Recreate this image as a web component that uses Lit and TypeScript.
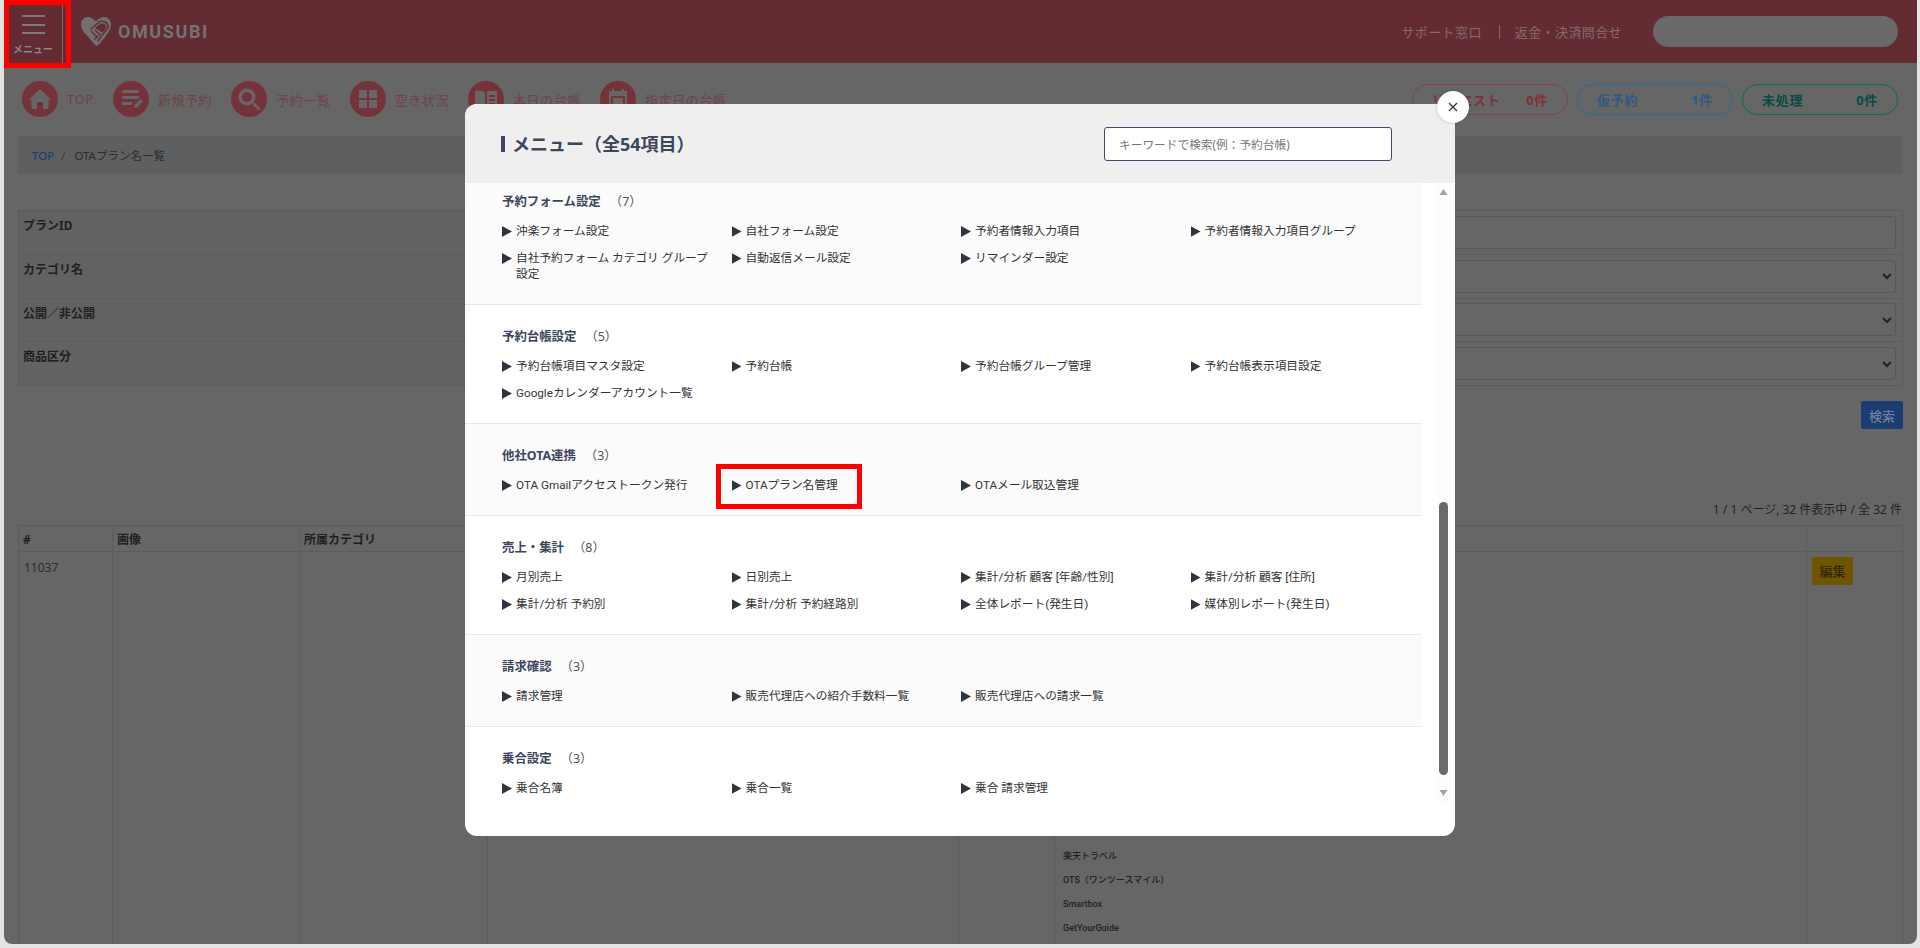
import { LitElement, css, html, svg } from "lit";
import { customElement } from "lit/decorators.js";

const menuSections = [
  {
    title: "予約フォーム設定",
    items: ["沖楽フォーム設定", "自社フォーム設定", "予約者情報入力項目", "予約者情報入力項目グループ", "自社予約フォーム カテゴリ グループ設定", "自動返信メール設定", "リマインダー設定"],
  },
  {
    title: "予約台帳設定",
    items: ["予約台帳項目マスタ設定", "予約台帳", "予約台帳グループ管理", "予約台帳表示項目設定", "Googleカレンダーアカウント一覧"],
  },
  {
    title: "他社OTA連携",
    items: ["OTA Gmailアクセストークン発行", "OTAプラン名管理", "OTAメール取込管理"],
  },
  {
    title: "売上・集計",
    items: ["月別売上", "日別売上", "集計/分析 顧客 [年齢/性別]", "集計/分析 顧客 [住所]", "集計/分析 予約別", "集計/分析 予約経路別", "全体レポート(発生日)", "媒体別レポート(発生日)"],
  },
  {
    title: "請求確認",
    items: ["請求管理", "販売代理店への紹介手数料一覧", "販売代理店への請求一覧"],
  },
  {
    title: "乗合設定",
    items: ["乗合名簿", "乗合一覧", "乗合 請求管理"],
  },
];

// 36x36 viewBox, drawn in the dimmed page colour on top of the circle
const navIcons = {
  home: svg`<path d="M18 8 L29 18.5 L26.5 18.5 L26.5 28 L21 28 L21 21 L15 21 L15 28 L9.5 28 L9.5 18.5 L7 18.5 Z"/>`,
  form: svg`<rect x="9" y="9" width="17" height="3" rx="1"/><rect x="9" y="15" width="17" height="3" rx="1"/><rect x="9" y="21" width="10" height="3" rx="1"/><path d="M21 27 L21.8 23.5 L27.5 18 L30 20.5 L24.4 26.2 Z"/>`,
  search: svg`<path fill-rule="evenodd" d="M16 7.5 A8.5 8.5 0 1 1 15.99 7.5 Z M16 11 A5 5 0 1 0 16.01 11 Z"/><path d="M21.5 23.5 L23.5 21.5 L29.5 27.5 L27.5 29.5 Z"/>`,
  grid: svg`<rect x="9" y="9" width="8" height="8"/><rect x="19" y="9" width="8" height="8"/><rect x="9" y="19" width="8" height="8"/><rect x="19" y="19" width="8" height="8"/>`,
  book: svg`<path d="M7 10 C10 9 14 9.5 17 11.5 L17 27 C14 25.5 10 25 7 25.5 Z"/><path fill-rule="evenodd" d="M19 10 L29 10 L29 27 L19 27 Z M21 14 L21 16 L27 16 L27 14 Z M21 18 L21 20 L27 20 L27 18 Z M21 22 L21 24 L27 24 L27 22 Z"/>`,
  calendar: svg`<path fill-rule="evenodd" d="M9 10 L12 10 L12 8 L14 8 L14 10 L22 10 L22 8 L24 8 L24 10 L27 10 L27 28 L9 28 Z M11 15 L11 26 L25 26 L25 15 Z"/><rect x="13" y="17" width="10" height="7"/>`,
};

const navLinks: [keyof typeof navIcons, string][] = [
  ["home", "TOP"],
  ["form", "新規予約"],
  ["search", "予約一覧"],
  ["grid", "空き状況"],
  ["book", "本日の台帳"],
  ["calendar", "指定日の台帳"],
];

const counters = [
  { label: "リクエスト", count: "0件", tone: "red" },
  { label: "仮予約", count: "1件", tone: "blue" },
  { label: "未処理", count: "0件", tone: "green" },
];

const filters = [
  { label: "プランID", select: false },
  { label: "カテゴリ名", select: true },
  { label: "公開／非公開", select: true },
  { label: "商品区分", select: true },
];

const otaNames = ["楽天トラベル", "OTS（ワンツースマイル）", "Smartbox", "GetYourGuide"];

@customElement("app-root")
export class AppRoot extends LitElement {
  static styles = css`
    :host {
      display: block;
      position: relative;
      width: 1920px;
      height: 948px;
      overflow: hidden;
      background: #e4e4e4;
      font-family: "Noto Sans", "Noto Sans CJK JP", sans-serif;
      color: #2a2a2a;
    }

    .page {
      margin-left: 4px;
      width: 1913px;
      height: 944px;
      background: #666;
      border-radius: 0 0 8px 8px;
      overflow: hidden;
    }

    /* header */
    .header {
      height: 63px;
      background: #632c32;
      display: flex;
      align-items: center;
      padding-right: 19px;
    }
    .menu-button {
      width: 59px;
      height: 63px;
      border-right: 1px solid #7d6a6c;
      display: flex;
      flex-direction: column;
      align-items: center;
      padding-top: 15px;
      box-sizing: border-box;
      flex: none;
    }
    .menu-button i {
      display: block;
      width: 23px;
      height: 2px;
      background: #7b7b7b;
      margin-bottom: 6.5px;
    }
    .menu-button span {
      font-size: 10px;
      line-height: 14px;
      color: #8c8486;
      font-weight: 700;
      margin-top: 1px;
    }
    .logo {
      display: flex;
      align-items: center;
      margin-left: 18px;
      gap: 7px;
      color: #737373;
    }
    .logo svg {
      width: 30px;
      height: 29px;
      display: block;
    }
    .logo span {
      font-family: "Roboto", "Noto Sans", sans-serif;
      font-size: 18px;
      font-weight: 700;
      letter-spacing: 1.6px;
    }
    .support {
      margin-left: auto;
      display: flex;
      align-items: center;
      font-size: 13px;
      letter-spacing: 0.4px;
      color: #86696d;
    }
    .support i {
      width: 1px;
      height: 14px;
      background: #86696d;
      margin: 0 15px 0 17px;
    }
    .account {
      width: 245px;
      height: 31px;
      border-radius: 16px;
      background: #696969;
      margin-left: 31px;
    }

    /* shortcut row */
    .nav {
      display: flex;
      align-items: center;
      justify-content: space-between;
      padding: 18px 19px 19px 18px;
    }
    .links {
      display: flex;
      gap: 19px;
    }
    .link {
      display: flex;
      align-items: center;
      gap: 9px;
      font-size: 13px;
      letter-spacing: 0.6px;
      color: #704248;
    }
    .link svg {
      width: 36px;
      height: 36px;
      display: block;
      fill: #666;
      background: #76323a;
      border-radius: 50%;
    }
    .counters {
      display: flex;
      gap: 9px;
    }
    .counter {
      width: 156px;
      height: 31px;
      box-sizing: border-box;
      border: 1px solid;
      border-radius: 16px;
      display: flex;
      align-items: center;
      justify-content: space-between;
      padding: 0 19px;
      font-size: 13px;
      font-weight: 700;
      letter-spacing: 0.7px;
    }
    .counter.red { color: #7f3039; border-color: #86404a; }
    .counter.blue { color: #2f5a82; border-color: #2f6a98; }
    .counter.green { color: #064c44; border-color: #0a6a5c; }

    /* breadcrumb */
    .breadcrumb {
      margin: 0 15px 0 14px;
      height: 38px;
      box-sizing: border-box;
      background: #5e5f61;
      border-radius: 3px;
      display: flex;
      align-items: center;
      padding-left: 14px;
      font-size: 11.5px;
      color: #2c2c2c;
    }
    .breadcrumb a { color: #0f3f72; }
    .breadcrumb span { margin: 0 9px 0 7px; color: #3a3a3a; }

    /* search form */
    .filters {
      margin: 36px 14px 0 14px;
      border: 1px solid #5c5c5c;
      border-bottom-width: 0;
    }
    .filter {
      display: grid;
      grid-template-columns: 600px 1fr;
      height: 43.75px;
      border-bottom: 1px solid #5c5c5c;
      box-sizing: border-box;
    }
    .filter label {
      background: #626262;
      padding: 7px 4px;
      font-size: 12px;
      line-height: 16px;
      font-weight: 700;
      color: #1f1f1f;
    }
    .filter div {
      display: flex;
      align-items: center;
      padding: 0 6px;
    }
    .filter .field {
      flex: 1;
      height: 33px;
      box-sizing: border-box;
      border: 1px solid #595959;
      border-radius: 3px;
      display: flex;
      align-items: center;
      justify-content: flex-end;
      padding: 0 2px 0 0;
    }
    .field svg { width: 12px; height: 12px; display: block; }
    .actions {
      display: flex;
      justify-content: flex-end;
      margin: 15px 14px 0 0;
    }
    .search-button {
      width: 42px;
      height: 28px;
      background: #1c3d70;
      color: #7c8aa2;
      border-radius: 2px;
      font-size: 13px;
      display: flex;
      align-items: center;
      justify-content: center;
    }
    .pager {
      margin: 72px 15px 6px 0;
      text-align: right;
      font-size: 12px;
      line-height: 18px;
      color: #222;
    }

    /* plans table */
    .table {
      margin: 0 14px 0 14px;
      border-top: 1px solid #5c5c5c;
      border-left: 1px solid #5c5c5c;
      display: grid;
      grid-template-columns: 94px 187px 188px 471px 96px 752px 1fr;
      grid-template-rows: 26px 393px;
    }
    .table > div {
      border-right: 1px solid #5c5c5c;
      border-bottom: 1px solid #5c5c5c;
      font-size: 12px;
      line-height: 16px;
      padding: 6px 4px;
      box-sizing: border-box;
      min-width: 0;
    }
    .table .th {
      font-weight: 700;
      color: #1f1f1f;
    }
    .table .td { padding-top: 8px; color: #2c2c2c; padding-left: 5px; }
    .table .names {
      display: flex;
      flex-direction: column;
      justify-content: flex-end;
      padding: 0 0 8.5px 8px;
      gap: 8.7px;
      font-family: "Roboto", "Noto Sans CJK JP", sans-serif;
      font-size: 9px;
      line-height: 15px;
      font-weight: 500;
      color: #1f1f1f;
    }
    .edit-button {
      width: 41px;
      height: 28px;
      margin: -3px 0 0 0;
      background: #705500;
      color: #2a2100;
      border-radius: 2px;
      font-size: 13px;
      display: flex;
      align-items: center;
      justify-content: center;
    }

    /* menu modal */
    .modal {
      position: absolute;
      left: 465px;
      top: 104px;
      width: 990px;
      height: 732px;
      background: #fff;
      border-radius: 12px;
      color: #333;
    }
    .modal-head {
      height: 79px;
      background: #efefef;
      border-radius: 12px 12px 0 0;
      display: flex;
      align-items: center;
      justify-content: space-between;
      padding: 0 63px 0 36px;
    }
    .modal-head h2 {
      margin: 0;
      font-size: 18px;
      font-weight: 700;
      line-height: 22px;
      color: #3c465c;
      border-left: 4px solid #3c465c;
      padding-left: 7px;
      height: 16px;
      display: flex;
      align-items: center;
    }
    .keyword {
      width: 288px;
      height: 34px;
      box-sizing: border-box;
      background: #fff;
      border: 1px solid #3f4b6b;
      border-radius: 3px;
      display: flex;
      align-items: center;
      padding-left: 14px;
      font-size: 11.7px;
      color: #777;
    }
    .close {
      position: absolute;
      right: -14px;
      top: -13px;
      width: 32px;
      height: 32px;
      background: #fff;
      border-radius: 50%;
      display: flex;
      align-items: center;
      justify-content: center;
      box-shadow: 0 0 3px rgba(0, 0, 0, 0.25);
    }
    .close svg { width: 10px; height: 10px; display: block; }
    .modal-body {
      height: 620px;
      display: flex;
      overflow: hidden;
    }
    .sections {
      width: 957px;
      flex: none;
    }
    .section {
      padding: 24px 2px 22px 37px;
      border-bottom: 1px solid #e9e9e9;
    }
    .section:nth-child(odd) { background: #fbfbfb; }
    .section:first-child { margin-top: -13px; }
    .section:last-child { border-bottom: none; }
    .section h3 {
      margin: 0 0 13px;
      font-size: 12.4px;
      line-height: 16px;
      font-weight: 700;
      color: #3c465c;
    }
    .section h3 span {
      font-weight: 400;
      margin-left: 9px;
      color: #555;
    }
    .items {
      display: grid;
      grid-template-columns: repeat(4, 229.5px);
      row-gap: 11px;
    }
    .item {
      position: relative;
      display: flex;
      gap: 4px;
      font-family: "Roboto", "Noto Sans CJK JP", sans-serif;
      font-size: 11.7px;
      line-height: 16px;
      padding-right: 20px;
    }
    .item::before {
      content: "";
      flex: none;
      width: 10px;
      height: 11px;
      margin-top: 3px;
      background: #2f3440;
      clip-path: polygon(0 0, 100% 50%, 0 100%);
    }
    .item.marked::after {
      content: "";
      position: absolute;
      left: -16px;
      top: -13px;
      width: 146px;
      height: 45px;
      box-sizing: border-box;
      border: 5px solid #f00;
    }
    .scrollbar {
      width: 15px;
      margin-left: 14px;
      height: 620px;
      background: #fdfdfd;
      display: flex;
      flex-direction: column;
      align-items: center;
      box-sizing: border-box;
      padding: 6px 0 7px;
    }
    .scrollbar i {
      display: block;
      width: 8px;
      height: 6px;
      background: #a3a3a3;
    }
    .scrollbar .up { clip-path: polygon(50% 0, 100% 100%, 0 100%); }
    .scrollbar .down { clip-path: polygon(0 0, 100% 0, 50% 100%); margin-top: 15px; }
    .scrollbar .thumb {
      width: 9px;
      height: 273px;
      margin-top: auto;
      background: #6a6a6a;
      border-radius: 5px;
      clip-path: none;
    }
    .menu-marker {
      position: absolute;
      left: 4px;
      top: 0;
      width: 67px;
      height: 68px;
      box-sizing: border-box;
      border: 5px solid #f00;
    }
  `;

  private renderLogo() {
    return html`<svg viewBox="0 0 30 29">
      <path fill="#707070" d="M15 4.5 C12.5 1.5 9.5 0 7 0 C3 0 0 3.2 0 7.5 C0 12 3 15.5 6 18.5 L14 28 L15.5 29 L18 27.5 L24 20 C27 16 30 12 30 7.5 C30 3.2 27 0 23 0 C20.5 0 17.5 1.5 15 4.5 Z"/>
      <path fill="none" stroke="#632c32" stroke-width="1.6" d="M9.5 12.5 L17.5 5.5 C20 3.6 23.5 4 25.5 6 C27.5 8.2 27 11 25.5 13 L21 18"/>
      <path fill="#632c32" d="M14 11 L19 7 C21 6 23.5 6.5 24.5 8 C25.5 9.5 25 11 24 12.5 L21.5 15.5 Z"/>
      <path fill="none" stroke="#632c32" stroke-width="1.3" d="M10 14 L17 21 M14 13 L21 20 M16.5 24.5 L20 20 M13.5 22.5 L17 18.5"/>
    </svg>`;
  }

  private renderSection(section: { title: string; items: string[] }) {
    return html`<section class="section">
      <h3>${section.title}<span>（${section.items.length}）</span></h3>
      <div class="items">
        ${section.items.map(
          (item) => html`<div class="item ${item === "OTAプラン名管理" ? "marked" : ""}">${item}</div>`
        )}
      </div>
    </section>`;
  }

  render() {
    return html`
      <div class="page">
        <header class="header">
          <div class="menu-button">
            <i></i><i></i><i></i>
            <span>メニュー</span>
          </div>
          <div class="logo">${this.renderLogo()}<span>OMUSUBI</span></div>
          <div class="support">サポート窓口<i></i>返金・決済問合せ</div>
          <div class="account"></div>
        </header>

        <div class="nav">
          <div class="links">
            ${navLinks.map(
              ([icon, label]) => html`<div class="link">
                <svg viewBox="0 0 36 36">${navIcons[icon]}</svg>${label}
              </div>`
            )}
          </div>
          <div class="counters">
            ${counters.map(
              (c) => html`<div class="counter ${c.tone}"><span>${c.label}</span><span>${c.count}</span></div>`
            )}
          </div>
        </div>

        <div class="breadcrumb"><a>TOP</a><span>/</span>OTAプラン名一覧</div>

        <div class="filters">
          ${filters.map(
            (f) => html`<div class="filter">
              <label>${f.label}</label>
              <div>
                <div class="field">
                  ${f.select
                    ? html`<svg viewBox="0 0 12 12"><path d="M2 4 L6 8 L10 4" fill="none" stroke="#222" stroke-width="2"/></svg>`
                    : ""}
                </div>
              </div>
            </div>`
          )}
        </div>
        <div class="actions"><div class="search-button">検索</div></div>
        <div class="pager">1 / 1 ページ, 32 件表示中 / 全 32 件</div>

        <div class="table">
          <div class="th">#</div>
          <div class="th">画像</div>
          <div class="th">所属カテゴリ</div>
          <div class="th"></div>
          <div class="th"></div>
          <div class="th"></div>
          <div class="th"></div>
          <div class="td">11037</div>
          <div class="td"></div>
          <div class="td"></div>
          <div class="td"></div>
          <div class="td"></div>
          <div class="names">${otaNames.map((n) => html`<span>${n}</span>`)}</div>
          <div class="td"><div class="edit-button">編集</div></div>
        </div>
      </div>

      <div class="menu-marker"></div>

      <div class="modal">
        <div class="modal-head">
          <h2>メニュー（全54項目）</h2>
          <div class="keyword">キーワードで検索(例：予約台帳)</div>
        </div>
        <div class="close">
          <svg viewBox="0 0 10 10"><path d="M1 1 L9 9 M9 1 L1 9" stroke="#333" stroke-width="1.2" fill="none"/></svg>
        </div>
        <div class="modal-body">
          <div class="sections">${menuSections.map((s) => this.renderSection(s))}</div>
          <div class="scrollbar">
            <i class="up"></i>
            <i class="thumb"></i>
            <i class="down"></i>
          </div>
        </div>
      </div>
    `;
  }
}
